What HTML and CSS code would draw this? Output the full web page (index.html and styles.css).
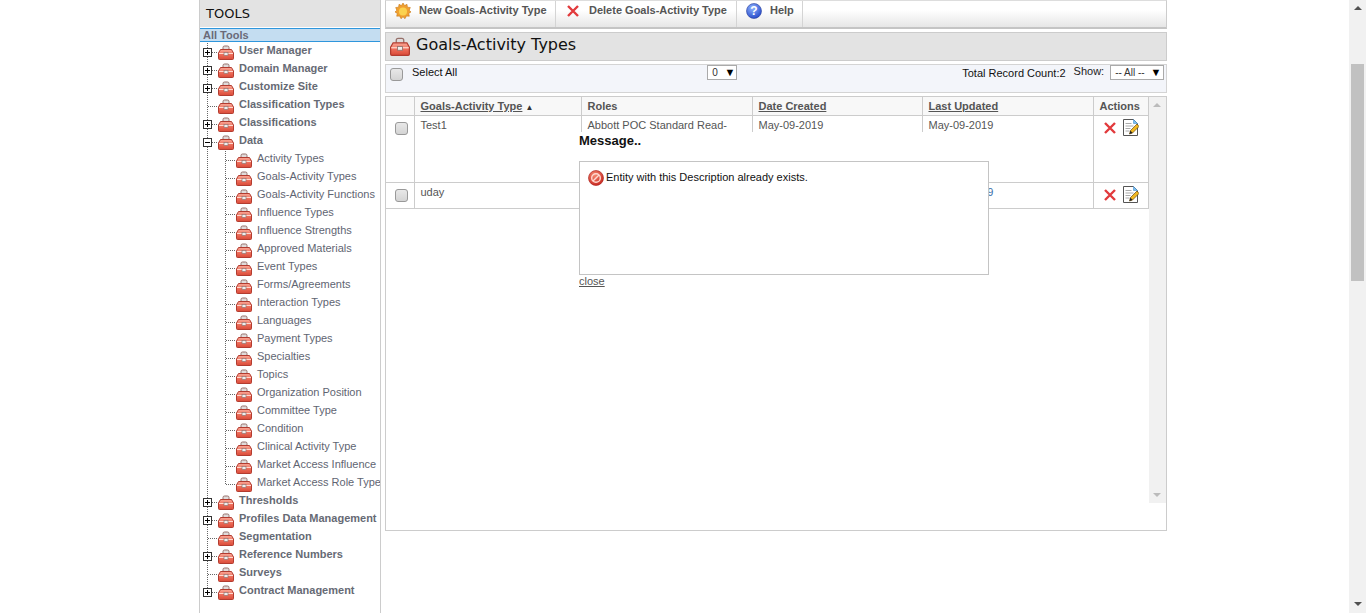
FILE: index.html
```html
<!DOCTYPE html>
<html>
<head>
    <meta charset="UTF-8">
    <title>Goals-Activity Types</title>
    <link rel="stylesheet" href="styles.css">
</head>
<body>
    <svg class="defs" width="0" height="0">
        <defs>
            <linearGradient id="boxred" x1="0" y1="0" x2="0" y2="1">
                <stop offset="0" stop-color="#f9a999"/>
                <stop offset="0.5" stop-color="#ee6f5c"/>
                <stop offset="1" stop-color="#d94a38"/>
            </linearGradient>
            <radialGradient id="helpblue" cx="0.4" cy="0.3" r="0.8">
                <stop offset="0" stop-color="#8fb4ff"/>
                <stop offset="1" stop-color="#1c3fc4"/>
            </radialGradient>
            <radialGradient id="stopred" cx="0.4" cy="0.3" r="0.8">
                <stop offset="0" stop-color="#f58a70"/>
                <stop offset="1" stop-color="#c41f1a"/>
            </radialGradient>
            <symbol id="toolbox" viewBox="0 0 16 15">
                <path d="M5 5V2.500Q5 1 6.500 1h3Q11 1 11 2.500V5" fill="#e0dcdc" stroke="#96706a"/>
                <path d="M2.500 4.500h11L15.500 8v5.500q0 1-1 1h-13q-1 0-1-1V8z" fill="url(#boxred)" stroke="#b23c30"/>
                <path d="M1 8.500h14" stroke="#ffd8ce"/>
                <rect x="6" y="7.500" width="4" height="3" fill="#eeeeee" stroke="#96706a" stroke-width="0.7"/>
            </symbol>
            <symbol id="cross" viewBox="0 0 14 14">
                <path d="M2 2l10 10M12 2L2 12" stroke="#e23a3c" stroke-width="2.400" fill="none"/>
            </symbol>
            <symbol id="edit" viewBox="0 0 16 17">
                <path d="M.5 .5h10l4 4v12H.5z" fill="#fff" stroke="#555"/>
                <path d="M10.500 .5v4h4z" fill="#7cc0f0" stroke="#4a90d0" stroke-width="0.6"/>
                <path d="M2.500 4.500h6M2.500 7h8M2.500 9.500h5M2.500 12h4" stroke="#aaa"/>
                <path d="M6.500 15l1-3.500L14 5l2 2.500-6.500 6.500z" fill="#f2b820" stroke="#6a4a10" stroke-width="0.7"/>
                <path d="M6.500 15l1-3.500 2 2.500z" fill="#222"/>
            </symbol>
        </defs>
    </svg>

    <div class="screen">
        <div class="page">
            <div class="sidebar">
                <div class="side-head">TOOLS</div>
                <div class="side-all">All Tools</div>
                <div class="tree">
                    <div class="row top"><span class="exp plus"></span><span class="conn"></span><svg class="tb"><use href="#toolbox"/></svg><span class="lbl">User Manager</span></div>
                    <div class="row top"><span class="exp plus"></span><span class="conn"></span><svg class="tb"><use href="#toolbox"/></svg><span class="lbl">Domain Manager</span></div>
                    <div class="row top"><span class="exp plus"></span><span class="conn"></span><svg class="tb"><use href="#toolbox"/></svg><span class="lbl">Customize Site</span></div>
                    <div class="row top"><span class="conn long"></span><svg class="tb"><use href="#toolbox"/></svg><span class="lbl">Classification Types</span></div>
                    <div class="row top"><span class="exp plus"></span><span class="conn"></span><svg class="tb"><use href="#toolbox"/></svg><span class="lbl">Classifications</span></div>
                    <div class="row top"><span class="exp minus"></span><span class="conn"></span><svg class="tb"><use href="#toolbox"/></svg><span class="lbl">Data</span></div>
                    <div class="sub">
                        <div class="row"><span class="conn long"></span><svg class="tb"><use href="#toolbox"/></svg><span class="lbl">Activity Types</span></div>
                        <div class="row"><span class="conn long"></span><svg class="tb"><use href="#toolbox"/></svg><span class="lbl">Goals-Activity Types</span></div>
                        <div class="row"><span class="conn long"></span><svg class="tb"><use href="#toolbox"/></svg><span class="lbl">Goals-Activity Functions</span></div>
                        <div class="row"><span class="conn long"></span><svg class="tb"><use href="#toolbox"/></svg><span class="lbl">Influence Types</span></div>
                        <div class="row"><span class="conn long"></span><svg class="tb"><use href="#toolbox"/></svg><span class="lbl">Influence Strengths</span></div>
                        <div class="row"><span class="conn long"></span><svg class="tb"><use href="#toolbox"/></svg><span class="lbl">Approved Materials</span></div>
                        <div class="row"><span class="conn long"></span><svg class="tb"><use href="#toolbox"/></svg><span class="lbl">Event Types</span></div>
                        <div class="row"><span class="conn long"></span><svg class="tb"><use href="#toolbox"/></svg><span class="lbl">Forms/Agreements</span></div>
                        <div class="row"><span class="conn long"></span><svg class="tb"><use href="#toolbox"/></svg><span class="lbl">Interaction Types</span></div>
                        <div class="row"><span class="conn long"></span><svg class="tb"><use href="#toolbox"/></svg><span class="lbl">Languages</span></div>
                        <div class="row"><span class="conn long"></span><svg class="tb"><use href="#toolbox"/></svg><span class="lbl">Payment Types</span></div>
                        <div class="row"><span class="conn long"></span><svg class="tb"><use href="#toolbox"/></svg><span class="lbl">Specialties</span></div>
                        <div class="row"><span class="conn long"></span><svg class="tb"><use href="#toolbox"/></svg><span class="lbl">Topics</span></div>
                        <div class="row"><span class="conn long"></span><svg class="tb"><use href="#toolbox"/></svg><span class="lbl">Organization Position</span></div>
                        <div class="row"><span class="conn long"></span><svg class="tb"><use href="#toolbox"/></svg><span class="lbl">Committee Type</span></div>
                        <div class="row"><span class="conn long"></span><svg class="tb"><use href="#toolbox"/></svg><span class="lbl">Condition</span></div>
                        <div class="row"><span class="conn long"></span><svg class="tb"><use href="#toolbox"/></svg><span class="lbl">Clinical Activity Type</span></div>
                        <div class="row"><span class="conn long"></span><svg class="tb"><use href="#toolbox"/></svg><span class="lbl">Market Access Influence</span></div>
                        <div class="row"><span class="conn long"></span><svg class="tb"><use href="#toolbox"/></svg><span class="lbl">Market Access Role Type</span></div>
                    </div>
                    <div class="row top"><span class="exp plus"></span><span class="conn"></span><svg class="tb"><use href="#toolbox"/></svg><span class="lbl">Thresholds</span></div>
                    <div class="row top"><span class="exp plus"></span><span class="conn"></span><svg class="tb"><use href="#toolbox"/></svg><span class="lbl">Profiles Data Management</span></div>
                    <div class="row top"><span class="conn long"></span><svg class="tb"><use href="#toolbox"/></svg><span class="lbl">Segmentation</span></div>
                    <div class="row top"><span class="exp plus"></span><span class="conn"></span><svg class="tb"><use href="#toolbox"/></svg><span class="lbl">Reference Numbers</span></div>
                    <div class="row top"><span class="conn long"></span><svg class="tb"><use href="#toolbox"/></svg><span class="lbl">Surveys</span></div>
                    <div class="row top"><span class="exp plus"></span><span class="conn"></span><svg class="tb"><use href="#toolbox"/></svg><span class="lbl">Contract Management</span></div>
                </div>
            </div>

            <div class="main">
                <div class="toolbar">
                    <a class="tool tool-new">
                        <svg class="tool-icon" viewBox="0 0 16 16">
                            <path d="M8 0l1.600 2.600L12 1.300l.4 2.900 2.900.3-1.100 2.700L16 9l-2.300 1.400.6 2.800-2.900-.2L10 15.700 8 13.800l-2 1.900L4.600 13l-2.900.2.600-2.800L0 9l1.800-1.800L.7 4.500l2.900-.3.400-2.900 2.400 1.300z" fill="#f0a030" stroke="#c87818" stroke-width="0.6"/>
                            <circle cx="8" cy="8.500" r="4" fill="#fbd24e"/>
                        </svg>
                        <span>New Goals-Activity Type</span>
                    </a>
                    <a class="tool tool-del">
                        <svg class="tool-icon"><use href="#cross"/></svg>
                        <span>Delete Goals-Activity Type</span>
                    </a>
                    <a class="tool tool-help">
                        <svg class="tool-icon" viewBox="0 0 16 16">
                            <circle cx="8" cy="8" r="7.500" fill="url(#helpblue)" stroke="#2a3f9a" stroke-width="0.6"/>
                            <text x="8" y="12" text-anchor="middle" class="help-mark">?</text>
                        </svg>
                        <span>Help</span>
                    </a>
                </div>

                <div class="titlebar">
                    <svg class="title-icon"><use href="#toolbox"/></svg>
                    <h1>Goals-Activity Types</h1>
                </div>

                <div class="selectbar">
                    <input type="checkbox" class="chk">
                    <span class="select-all">Select All</span>
                    <span class="pick pick-page">0 <b>▼</b></span>
                    <span class="count">Total Record Count:2</span>
                    <span class="show">Show:</span>
                    <span class="pick pick-show">-- All -- <b>▼</b></span>
                </div>

                <div class="panel">
                    <div class="grid-wrap">
                        <table class="grid">
                            <colgroup>
                                <col class="c-chk"><col class="c-type"><col class="c-roles"><col class="c-date"><col class="c-date2"><col class="c-act">
                            </colgroup>
                            <thead>
                                <tr>
                                    <th></th>
                                    <th><a>Goals-Activity Type</a> <span class="sort">▲</span></th>
                                    <th>Roles</th>
                                    <th><a>Date Created</a></th>
                                    <th><a>Last Updated</a></th>
                                    <th>Actions</th>
                                </tr>
                            </thead>
                            <tbody>
                                <tr class="r1">
                                    <td class="cell-chk"><input type="checkbox" class="chk"></td>
                                    <td>Test1</td>
                                    <td>Abbott POC Standard Read-</td>
                                    <td>May-09-2019</td>
                                    <td>May-09-2019</td>
                                    <td class="cell-act"><svg class="ic-x"><use href="#cross"/></svg><svg class="ic-edit"><use href="#edit"/></svg></td>
                                </tr>
                                <tr class="r2">
                                    <td class="cell-chk"><input type="checkbox" class="chk"></td>
                                    <td>uday</td>
                                    <td></td>
                                    <td></td>
                                    <td class="blue">May-09-2019</td>
                                    <td class="cell-act"><svg class="ic-x"><use href="#cross"/></svg><svg class="ic-edit"><use href="#edit"/></svg></td>
                                </tr>
                            </tbody>
                        </table>
                    </div>
                    <div class="inner-scroll">
                        <span class="arrow up"></span>
                        <span class="arrow down"></span>
                    </div>
                </div>

                <div class="dialog">
                    <div class="dialog-title">Message..</div>
                    <div class="dialog-box">
                        <svg class="stop-icon" viewBox="0 0 16 16">
                            <circle cx="8" cy="8" r="7.500" fill="url(#stopred)" stroke="#a81a16" stroke-width="0.6"/>
                            <circle cx="8" cy="8" r="4.300" fill="none" stroke="#ffd8d0" stroke-width="1.400"/>
                            <path d="M5 11l6-6" stroke="#ffd8d0" stroke-width="1.400"/>
                        </svg>
                        <span>Entity with this Description already exists.</span>
                    </div>
                    <a class="dialog-close">close</a>
                </div>
            </div>
        </div>

        <div class="page-scroll">
            <span class="arrow up dark"></span>
            <div class="thumb"></div>
            <span class="arrow down dark"></span>
        </div>
    </div>
</body>
</html>
```

FILE: styles.css
```css
html, body {
    margin: 0;
    height: 100%;
    overflow: hidden;
    background: #fff;
    font-family: "Liberation Sans", Arial, sans-serif;
    font-size: 11px;
    color: #555;
}

.defs {
    position: absolute;
}

.screen {
    display: flex;
    height: 613px;
}

.page {
    flex: 1;
    display: flex;
    gap: 4px;
    padding-left: 199px;
}

/* left tree */
.sidebar {
    width: 182px;
    box-sizing: border-box;
    border-left: 1px solid #ccc;
    border-right: 1px solid #ccc;
    overflow: hidden;
}

.side-head {
    height: 27px;
    line-height: 27px;
    padding-left: 6px;
    background: #e3e3e3;
    color: #111;
    font-family: "DejaVu Sans", sans-serif;
    font-size: 13px;
}

.side-all {
    height: 12px;
    line-height: 12px;
    padding-left: 3px;
    margin-top: 1px;
    background: #c4ddf1;
    border-top: 1px solid #2f96dc;
    border-bottom: 1px solid #2f96dc;
    font-weight: bold;
    color: #6a6a78;
}

.tree, .sub {
    padding-left: 1px;
    background: repeating-linear-gradient(#666 0 1px, transparent 1px 2px) left top / 1px calc(100% - 8px) no-repeat;
}

.tree {
    margin: 1px 0 0 7px;
}

.sub {
    margin-left: 17px;
}

.row {
    display: flex;
    align-items: flex-start;
    height: 18px;
    white-space: nowrap;
}

.exp {
    flex: none;
    box-sizing: border-box;
    width: 9px;
    height: 9px;
    margin: 5px 0 0 -5px;
    border: 1px solid #333;
    background-color: #fff;
    background-repeat: no-repeat;
    background-position: center;
}

.exp.plus {
    background-image: linear-gradient(#000, #000), linear-gradient(#000, #000);
    background-size: 5px 1px, 1px 5px;
}

.exp.minus {
    background-image: linear-gradient(#000, #000);
    background-size: 5px 1px;
}

.conn {
    flex: none;
    width: 5px;
    margin-top: 9px;
    border-top: 1px dotted #666;
}

.conn.long {
    width: 9px;
}

.tb {
    flex: none;
    width: 16px;
    height: 15px;
    margin: 2px 0 0 1px;
}

.lbl {
    margin-left: 5px;
    line-height: 14px;
    color: #5f6572;
}

.top .lbl {
    font-weight: bold;
    color: #666a74;
}

/* main column */
.main {
    position: relative;
    width: 782px;
    display: flex;
    flex-direction: column;
    gap: 3px;
}

.toolbar {
    display: flex;
    height: 29px;
    box-sizing: border-box;
    border: 1px solid #ccc;
    border-top-color: #ddd;
    border-bottom: 2px solid #c4c4c4;
    background: linear-gradient(#fff 35%, #e6e6e6);
}

.tool {
    display: flex;
    align-items: flex-start;
    box-sizing: border-box;
    border-right: 1px solid #d4d4d4;
    font-weight: bold;
    color: #555;
}

.tool span {
    line-height: 14px;
    margin-top: 2px;
}

.tool-new { width: 170px; padding-left: 9px; }
.tool-del { width: 181px; padding-left: 10px; }
.tool-help { width: 66px; padding-left: 9px; }

.tool-icon {
    width: 16px;
    height: 16px;
    margin: 2px 8px 0 0;
}

.tool-del .tool-icon {
    width: 14px;
    height: 14px;
    margin: 3px 9px 0 0;
}

.help-mark {
    font: bold 12px "Liberation Sans", sans-serif;
    fill: #fff;
}

.titlebar {
    display: flex;
    align-items: flex-start;
    height: 29px;
    box-sizing: border-box;
    padding-left: 4px;
    background: #e3e3e3;
    border: 1px solid #ccc;
}

.title-icon {
    width: 20px;
    height: 19px;
    margin: 4px 6px 0 0;
}

.titlebar h1 {
    margin: 0;
    font-family: "DejaVu Sans", sans-serif;
    font-weight: normal;
    font-size: 16px;
    line-height: 23px;
    color: #111;
}

.selectbar {
    display: flex;
    align-items: flex-start;
    height: 29px;
    box-sizing: border-box;
    background: #f3f5fa;
    border: 1px solid #d4d4d4;
    color: #111;
}

.chk {
    appearance: none;
    display: block;
    box-sizing: border-box;
    width: 13px;
    height: 13px;
    margin: 0;
    background: linear-gradient(#e8e8e8, #d4d4d4);
    border: 1px solid #999;
    border-radius: 3px;
}

.selectbar .chk {
    margin: 3px 9px 0 4px;
}

.select-all {
    line-height: 14px;
}

.pick {
    box-sizing: border-box;
    height: 15px;
    line-height: 13px;
    padding-left: 4px;
    background: #fff;
    border: 1px solid #aaa;
    font-size: 10px;
    color: #333;
    white-space: nowrap;
}

.pick b {
    margin-left: 4px;
    font-size: 11px;
    color: #000;
}

.pick-page {
    width: 30px;
    margin-left: 250px;
}

.count {
    margin: 1px 0 0 225px;
    line-height: 14px;
}

.show {
    margin: 0 0 0 8px;
    line-height: 13px;
    color: #222;
}

.pick-show {
    width: 54px;
    margin-left: 6px;
    padding-left: 4px;
}

.pick-show b {
    margin-left: 3px;
}

.panel {
    display: flex;
    align-items: flex-start;
    height: 435px;
    box-sizing: border-box;
    border: 1px solid #ccc;
}

.grid-wrap {
    width: 763px;
}

.grid {
    width: 762px;
    table-layout: fixed;
    border-collapse: collapse;
}

.c-chk { width: 28px; }
.c-type { width: 167px; }
.c-roles { width: 171px; }
.c-date { width: 170px; }
.c-date2 { width: 171px; }
.c-act { width: 55px; }

.grid th, .grid td {
    border: 1px solid #ccc;
    padding: 3px 5px 3px 6px;
    text-align: left;
    vertical-align: top;
    line-height: 13px;
    overflow: hidden;
    white-space: nowrap;
}

.grid tr > :first-child { border-left: 0; }

.grid thead th {
    border-top: 0;
    padding-bottom: 1px;
    background: #f8f8f8;
    color: #555;
}

.grid th a { text-decoration: underline; }

.sort {
    font-size: 8px;
    color: #333;
}

.r1 { height: 67px; }
.r2 { height: 26px; }

.grid td.cell-chk {
    padding: 6px 0 0 9px;
}

.grid td.blue {
    color: #3a6ea8;
}

.grid td.cell-act {
    padding: 0 0 0 9px;
}

.ic-x {
    width: 14px;
    height: 14px;
    margin-top: 5px;
    vertical-align: top;
}

.ic-edit {
    width: 16px;
    height: 17px;
    margin: 3px 0 0 6px;
    vertical-align: top;
}

.inner-scroll {
    display: flex;
    flex-direction: column;
    justify-content: space-between;
    align-items: center;
    width: 18px;
    height: 406px;
    box-sizing: border-box;
    padding: 6px 0;
    background: #f1f1f1;
}

/* message box, lies over the grid */
.dialog {
    position: absolute;
    left: 194px;
    top: 132px;
    width: 410px;
    height: 158px;
    background: #fff;
    color: #111;
}

.dialog-title {
    height: 29px;
    font-size: 13px;
    font-weight: bold;
    line-height: 18px;
    color: #111;
}

.dialog-box {
    display: flex;
    align-items: flex-start;
    height: 114px;
    box-sizing: border-box;
    padding: 7px 8px;
    border: 1px solid #c4c4c4;
}

.dialog-box span {
    line-height: 16px;
}

.stop-icon {
    width: 16px;
    height: 16px;
    margin: 1px 2px 0 0;
}

.dialog-close {
    display: block;
    line-height: 13px;
    text-decoration: underline;
    color: #555;
}

/* window scrollbar */
.page-scroll {
    display: flex;
    flex-direction: column;
    align-items: center;
    width: 17px;
    padding: 6px 0 7px;
    box-sizing: border-box;
    background: #f1f1f1;
}

.thumb {
    width: 13px;
    height: 217px;
    margin: 54px 0 auto;
    background: #c1c1c1;
}

.arrow {
    display: block;
    width: 0;
    height: 0;
    border-left: 4px solid transparent;
    border-right: 4px solid transparent;
}

.arrow.up { border-bottom: 4px solid #bbb; }
.arrow.down { border-top: 4px solid #bbb; }
.arrow.up.dark { border-bottom-color: #505050; }
.arrow.down.dark { border-top-color: #505050; }
```
